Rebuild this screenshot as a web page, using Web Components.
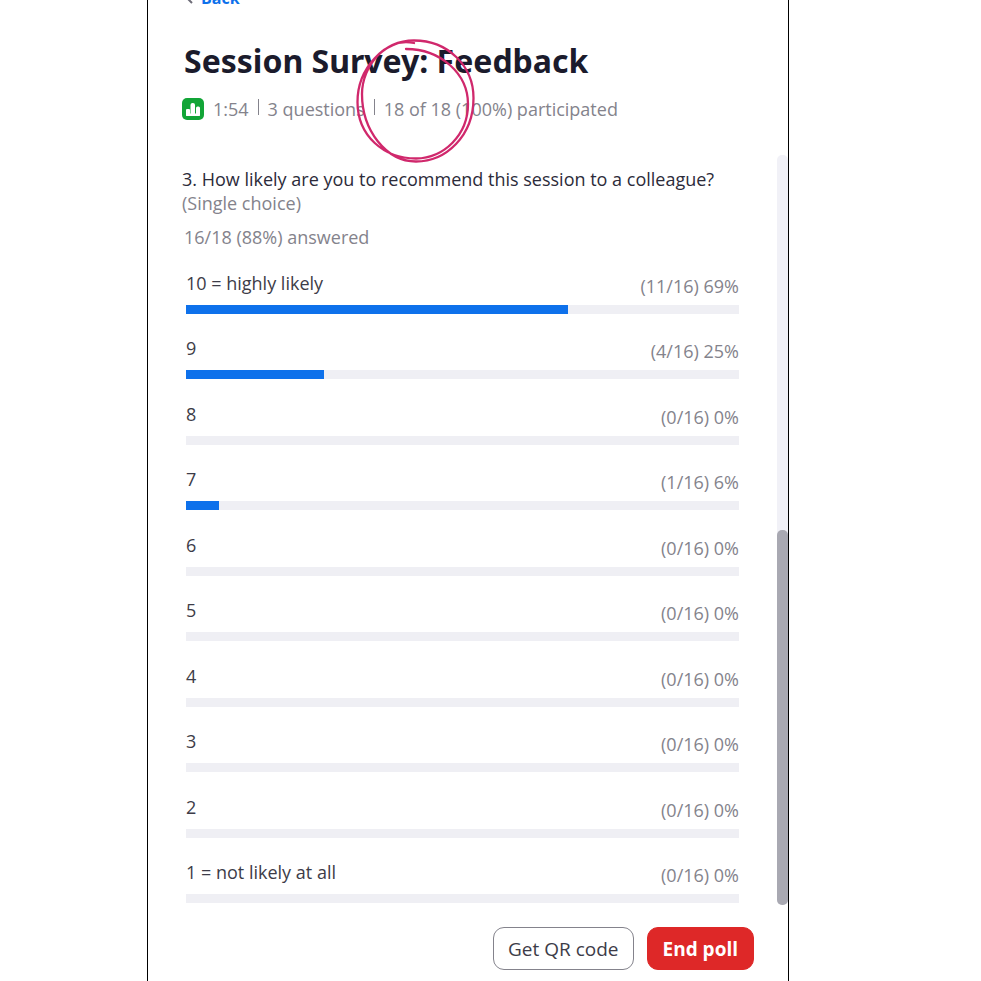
<!DOCTYPE html>
<html lang="en">
<head>
<meta charset="utf-8">
<title>Session Survey: Feedback</title>
<style>
body { margin: 0; background: #fff; font-family: "Open Sans", "Noto Sans", sans-serif; color: #3d3c48; }
</style>
</head>
<body>
<poll-page></poll-page>
<script>
const define = (name, html, setup) => {
  const template = document.createElement('template');
  template.innerHTML = '<style>*{box-sizing:border-box}</style>' + html;
  customElements.define(name, class extends HTMLElement {
    constructor() {
      super();
      this.attachShadow({ mode: 'open' }).append(template.content.cloneNode(true));
    }
    connectedCallback() { if (setup) setup(this, this.shadowRoot); }
  });
};

define('poll-icon', `
<style>:host{display:block;width:22px;height:22px;flex:none} svg{display:block}</style>
<svg width="22" height="22" viewBox="0 0 22 22" aria-hidden="true">
  <rect width="22" height="22" rx="5" fill="#12a537"/>
  <g fill="#fff"><rect x="4" y="11" width="4" height="7" rx="1"/><rect x="8.500" y="5" width="4.500" height="13" rx="2"/><rect x="14" y="8.500" width="4" height="9.500" rx="1.500"/><rect x="4" y="15.500" width="14" height="2.500" rx="1"/></g>
</svg>`);

define('hand-circle', `
<style>:host{display:block;width:120px;height:128px;pointer-events:none} svg{display:block}</style>
<svg width="120" height="128" viewBox="0 0 120 128" fill="none" stroke="#d0286c" stroke-width="2.300" stroke-linecap="round" stroke-linejoin="round" aria-hidden="true">
  <path d="M50 11C85 11 112 36 112 66C112 97 88 120 60 120.500C28 120.500 1.500 98 1.500 64C1.500 30 28 2.500 58 2.500C92 2.500 117.500 28 117.500 60C117.500 98 90 123.500 60 123.500C30 123.500 6 92 6 56C6 28 30 -1 58 5"/>
</svg>`);

define('poll-header', `
<style>
:host{display:block;position:relative;padding:35px 32px 0}
h1{margin:0;padding-left:4px;font-family:"Noto Sans","Open Sans",sans-serif;font-size:32px;line-height:40px;font-weight:700;color:#1b1b2c;white-space:nowrap}
.meta{display:flex;align-items:center;gap:9px;margin-top:16px;padding-left:2px;font-size:18px;line-height:24px;color:#84838c;white-space:nowrap}
i{width:1px;height:16px;background:#84838c;margin-bottom:4px}
hand-circle{position:absolute;left:208px;top:32px}
</style>
<h1>Session Survey: Feedback</h1>
<div class="meta"><poll-icon></poll-icon><span>1:54</span><i></i><span>3 questions</span><i></i><span>18 of 18 (100%) participated</span></div>
<hand-circle></hand-circle>`);

define('poll-option', `
<style>
:host{display:block;font-size:18px;line-height:24px}
.row{display:flex;justify-content:space-between;align-items:flex-end;height:27px;margin-bottom:7px}
label{align-self:flex-start;color:#3d3c48}
.count{color:#84838c}
progress{display:block;width:100%;height:9px;border:0;appearance:none;-webkit-appearance:none;background:#efeff4}
progress::-webkit-progress-bar{background:#efeff4}
progress::-webkit-progress-value{background:#0e71eb}
</style>
<div class="row"><label for="bar"><slot></slot></label><span class="count"></span></div>
<progress id="bar" max="100"></progress>`, (host, root) => {
  const votes = host.getAttribute('votes'), percent = host.getAttribute('percent');
  root.querySelector('.count').textContent = '(' + votes + '/16) ' + percent + '%';
  root.querySelector('progress').value = Number(percent);
});

define('poll-question', `
<style>
:host{display:flex;flex-direction:column;flex:1;padding:12px 38px 2px 34px;font-size:18px;line-height:24px}
h2{margin:0;font:inherit;color:#2c2b3a}
p{margin:0;color:#84838c}
.answered{margin:10px 0 22px 2px}
.options{flex:1;display:flex;flex-direction:column;justify-content:space-between;gap:16px;margin-left:4px}
</style>
<h2><slot name="title"></slot></h2>
<p><slot name="kind"></slot></p>
<p class="answered"><slot name="answered"></slot></p>
<div class="options"><slot></slot></div>`);

define('scroll-track', `
<style>
:host{display:flex;flex-direction:column;justify-content:flex-end;width:11px;background:#f1f1f7;border-radius:5px;flex:none}
div{height:50%;background:#a9a9b2;border-radius:5px}
</style><div></div>`);

define('poll-button', `
<style>
:host{display:block}
button{height:43px;padding:0 14px;border:1px solid #84838c;border-radius:11px;background:#fff;color:#3d3c48;font:inherit;font-size:19px;line-height:24px;white-space:nowrap}
:host([danger]) button{padding:0 15px;background:#de2828;border-color:#de2828;color:#fff;font-weight:700}
</style><button type="button"><slot></slot></button>`);

define('poll-page', `
<style>
:host{display:grid;grid-template-columns:147fr 642fr 192fr;min-height:100vh}
main{grid-column:2;display:flex;flex-direction:column;border:solid #000;border-width:0 1px;min-width:0}
nav{height:6px;overflow:hidden;display:flex;align-items:flex-end;padding-left:38px}
a{display:flex;align-items:center;gap:7px;font-size:16px;line-height:16px;font-weight:700;color:#0e71eb;text-decoration:none}
.body{flex:1;display:flex;margin-top:34px}
footer{display:flex;justify-content:flex-end;gap:13px;padding:22px 34px 11px}
</style>
<main>
  <nav><a href="#"><svg width="8" height="12" viewBox="0 0 8 12" fill="none" stroke="#6e6d78" stroke-width="2" aria-hidden="true"><path d="M6 1L1 6L6 11"/></svg>Back</a></nav>
  <poll-header></poll-header>
  <div class="body">
    <poll-question>
      <span slot="title">3. How likely are you to recommend this session to a colleague?</span>
      <span slot="kind">(Single choice)</span>
      <span slot="answered">16/18 (88%) answered</span>
      <poll-option votes="11" percent="69">10 = highly likely</poll-option>
      <poll-option votes="4" percent="25">9</poll-option>
      <poll-option votes="0" percent="0">8</poll-option>
      <poll-option votes="1" percent="6">7</poll-option>
      <poll-option votes="0" percent="0">6</poll-option>
      <poll-option votes="0" percent="0">5</poll-option>
      <poll-option votes="0" percent="0">4</poll-option>
      <poll-option votes="0" percent="0">3</poll-option>
      <poll-option votes="0" percent="0">2</poll-option>
      <poll-option votes="0" percent="0">1 = not likely at all</poll-option>
    </poll-question>
    <scroll-track></scroll-track>
  </div>
  <footer><poll-button>Get QR code</poll-button><poll-button danger>End poll</poll-button></footer>
</main>`);
</script>
</body>
</html>
